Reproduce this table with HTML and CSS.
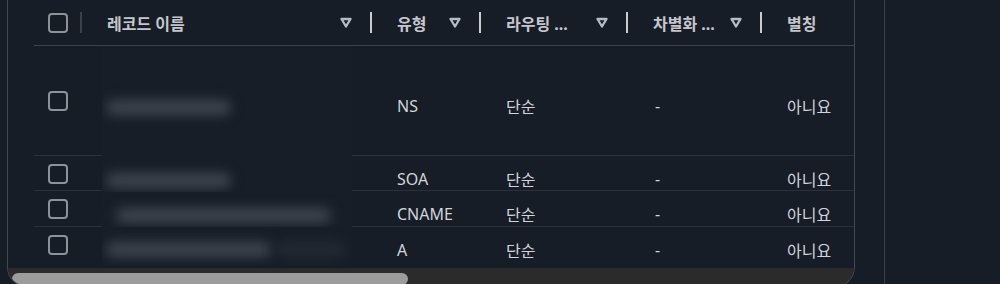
FILE: index.html
```html
<!DOCTYPE html>
<html lang="ko">
<head>
<meta charset="utf-8">
<title>레코드</title>
<link rel="stylesheet" href="styles.css">
</head>
<body>
<div class="page">
  <div class="panel">
    <div class="table">
      <div class="thead">
        <div class="th th-check"><span class="cb"></span><span class="sep dim"></span></div>
        <div class="th"><span class="label">레코드 이름</span><svg class="sort" viewBox="0 0 12 11" width="12" height="11"><path d="M1.5 2h9L6 9.5z"/></svg><span class="sep"></span></div>
        <div class="th"><span class="label">유형</span><svg class="sort" viewBox="0 0 12 11" width="12" height="11"><path d="M1.5 2h9L6 9.5z"/></svg><span class="sep"></span></div>
        <div class="th"><span class="label">라우팅 ...</span><svg class="sort" viewBox="0 0 12 11" width="12" height="11"><path d="M1.5 2h9L6 9.5z"/></svg><span class="sep"></span></div>
        <div class="th"><span class="label">차별화 ...</span><svg class="sort" viewBox="0 0 12 11" width="12" height="11"><path d="M1.5 2h9L6 9.5z"/></svg><span class="sep"></span></div>
        <div class="th"><span class="label">별칭</span></div>
      </div>
      <div class="tr r1">
        <div class="td td-check"><span class="cb"></span></div>
        <div class="td td-name"><div class="redact"><span class="blot b1"></span></div></div>
        <div class="td text">NS</div>
        <div class="td text">단순</div>
        <div class="td text dash">-</div>
        <div class="td text">아니요</div>
      </div>
      <div class="tr r2">
        <div class="td td-check"><span class="cb"></span></div>
        <div class="td td-name"><div class="redact"><span class="blot b1"></span></div></div>
        <div class="td text">SOA</div>
        <div class="td text">단순</div>
        <div class="td text dash">-</div>
        <div class="td text">아니요</div>
      </div>
      <div class="tr r3">
        <div class="td td-check"><span class="cb"></span></div>
        <div class="td td-name"><div class="redact"><span class="blot b3"></span></div></div>
        <div class="td text">CNAME</div>
        <div class="td text">단순</div>
        <div class="td text dash">-</div>
        <div class="td text">아니요</div>
      </div>
      <div class="tr r4">
        <div class="td td-check"><span class="cb"></span></div>
        <div class="td td-name"><div class="redact last"><span class="blot b4"></span><span class="blot b4b"></span></div></div>
        <div class="td text">A</div>
        <div class="td text">단순</div>
        <div class="td text dash">-</div>
        <div class="td text">아니요</div>
      </div>
    </div>
    <div class="hscroll"><div class="thumb"></div></div>
  </div>
  <div class="side"></div>
</div>
</body>
</html>
```
FILE: styles.css
```css
html, body {
  margin: 0;
  padding: 0;
  background: #161d26;
}
body {
  width: 1000px;
  height: 284px;
  overflow: hidden;
  font-family: "Noto Sans", "Noto Sans CJK KR", sans-serif;
  font-size: 16px;
  color: #d1d5db;
}
.page {
  display: flex;
  height: 284px;
  overflow: hidden;
}
.panel {
  flex: 0 0 848px;
  box-sizing: border-box;
  margin-left: 7px;
  height: 287px;
  border: 1px solid #424852;
  border-top: none;
  border-radius: 0 0 20px 20px;
  overflow: hidden;
  display: flex;
  flex-direction: column;
}
.side {
  flex: 1;
  margin-left: 29px;
  border-left: 1px solid #3a4049;
}
.table {
  padding: 0 0 6px 26px;
}
.thead, .tr {
  display: grid;
  grid-template-columns: 48px 290px 109px 147px 134px 1fr;
}
.thead {
  height: 45px;
  border-bottom: 1px solid #3d434c;
}
.th {
  display: flex;
  align-items: center;
  padding-left: 25px;
  font-weight: 700;
  color: #c6c6cd;
  white-space: nowrap;
}
.th-check {
  padding-left: 14px;
  justify-content: space-between;
}
.label {
  flex: 1;
  overflow: hidden;
}
.sort {
  display: block;
  flex: none;
  fill: none;
  stroke: #b6bcc5;
  stroke-width: 2.3;
  stroke-linejoin: round;
}
.sep {
  flex: none;
  width: 2px;
  height: 21px;
  margin-left: 18px;
  background: #c9cbd1;
}
.sep.dim {
  margin-left: 0;
  background: #3b414a;
}
.cb {
  display: block;
  flex: none;
  box-sizing: border-box;
  width: 20px;
  height: 20px;
  border: 2px solid #8e9198;
  border-radius: 4px;
}
.tr {
  align-items: center;
  border-bottom: 1px solid #2a313a;
}
.r1 { height: 109px; }
.r2 { height: 34px; }
.r3 { height: 35px; }
.r4 { height: 35px; border-bottom: none; }
.td {
  padding-left: 25px;
  white-space: nowrap;
}
.td.text {
  padding-top: 11px;
}
.td.dash {
  padding-left: 27px;
}
.td-check {
  padding-left: 14px;
}
.td-name {
  align-self: stretch;
  padding: 0 20px;
  display: flex;
}
.redact {
  flex: 1;
  margin-bottom: -1px;
  background: #171e27;
  display: flex;
  align-items: center;
  padding-top: 12px;
  overflow: hidden;
}
.redact.last {
  margin-bottom: -4px;
  padding-top: 6px;
}
.blot {
  display: block;
  flex: none;
  height: 15px;
  border-radius: 7px;
  background: #3e444e;
  filter: blur(6px);
}
.b1 { width: 125px; margin-left: 4px; }
.b3 { width: 215px; margin-left: 14px; }
.b4 { width: 165px; margin-left: 4px; }
.b4b { width: 70px; margin-left: 4px; background: #232932; }
.hscroll {
  flex: 1;
  background: #2b2b2b;
  padding: 5px 0 0 4px;
}
.thumb {
  width: 396px;
  height: 12px;
  border-radius: 6px;
  background: #9c9c9c;
}
```
